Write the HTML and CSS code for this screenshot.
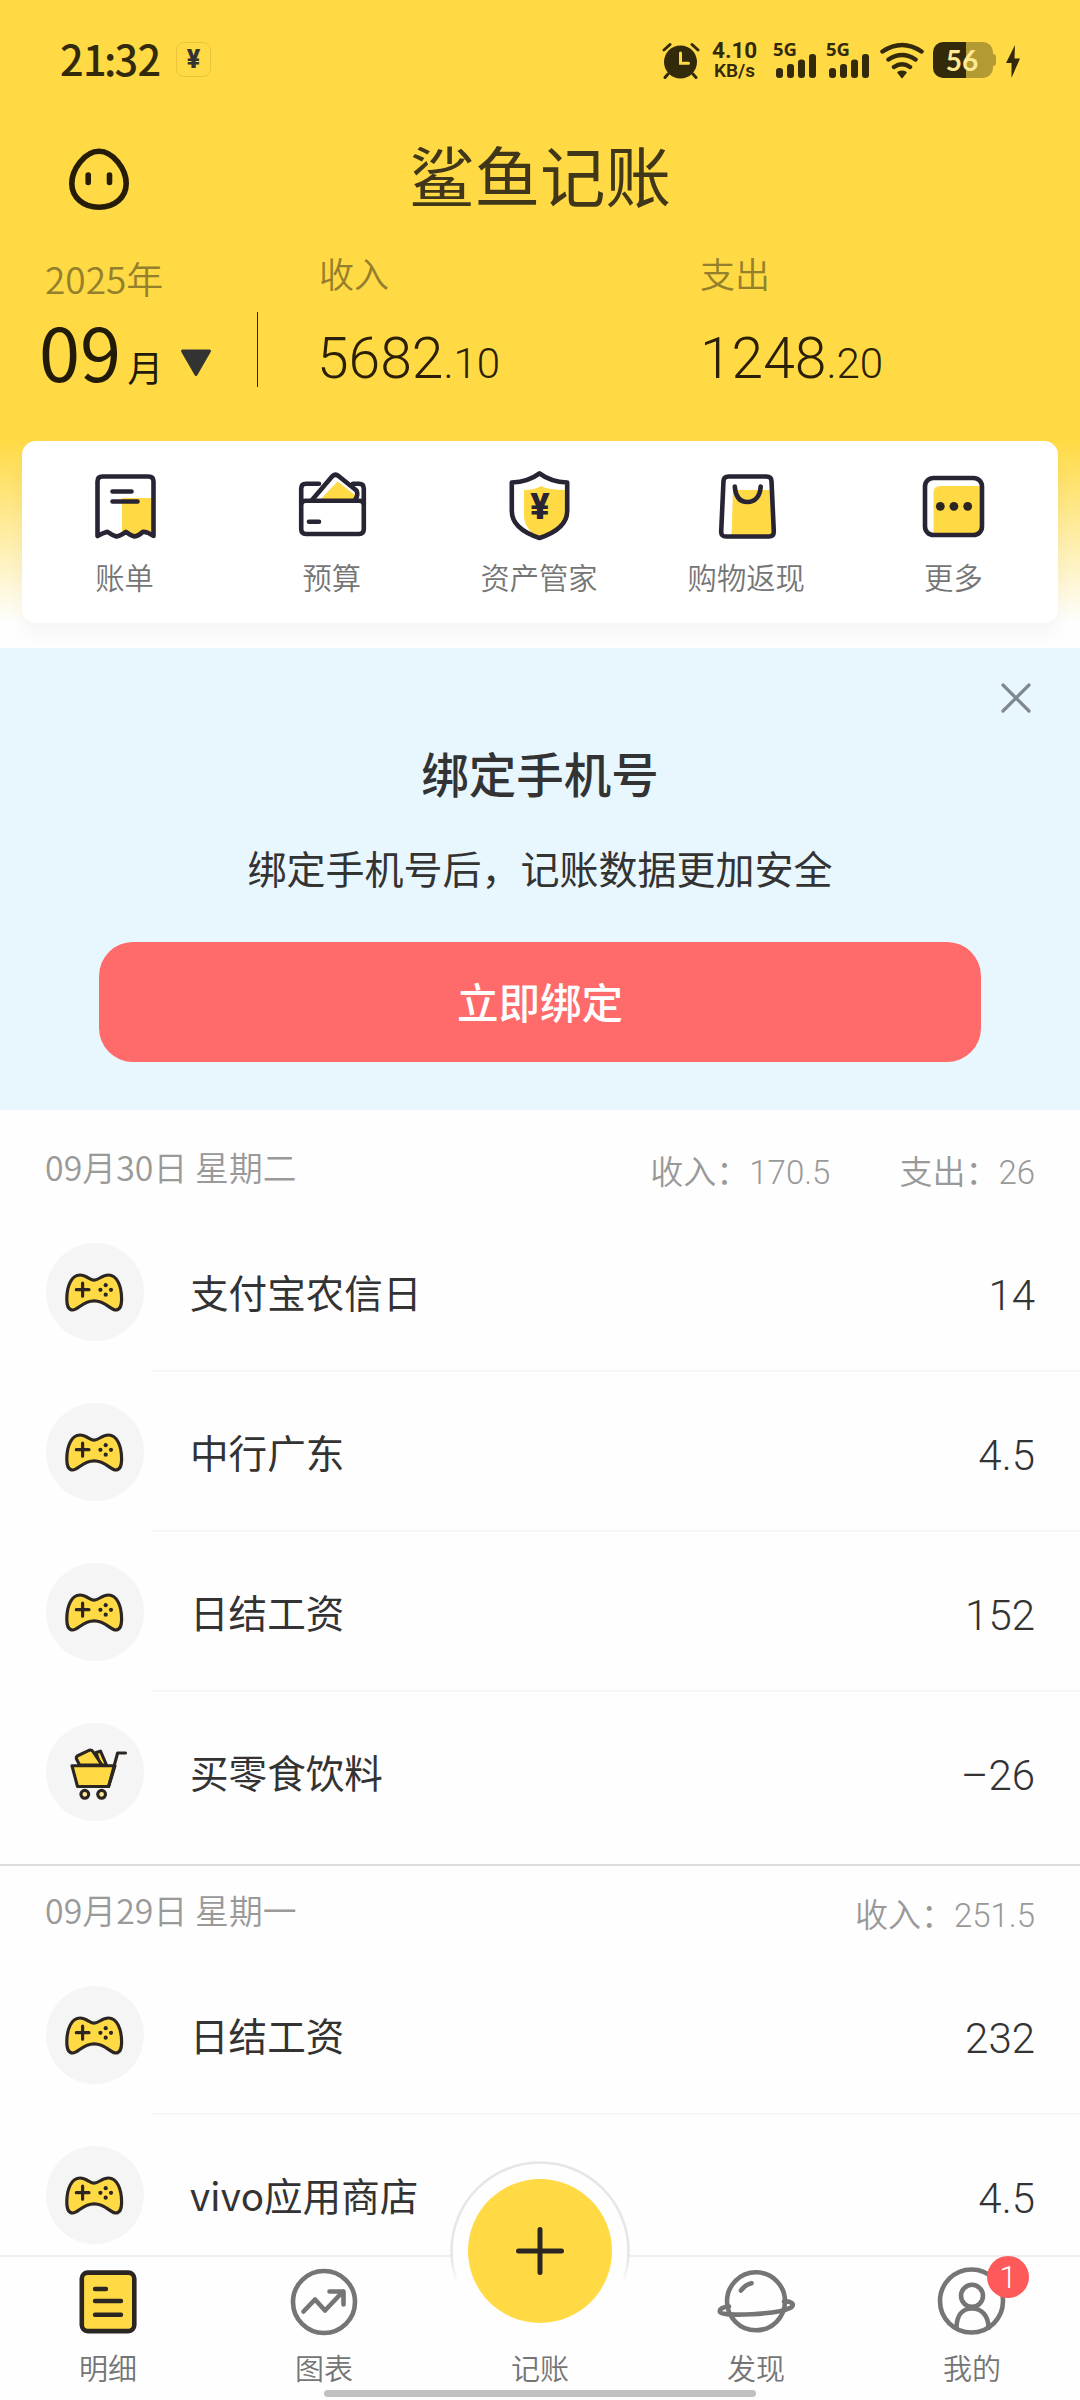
FILE: index.html
```html
<!DOCTYPE html>
<html lang="zh-CN">
<head>
<meta charset="utf-8">
<title>鲨鱼记账</title>
<link rel="stylesheet" href="styles.css">
</head>
<body>
<svg class="defs" width="0" height="0" aria-hidden="true">
  <symbol id="gamepad" viewBox="0 0 98 98">
    <path d="M48.200 37.200C44 37.200 40.500 32 34 32C25.500 32 20.800 43 20.800 56C20.800 63 22.500 67 26.700 67C32.500 67 36.500 57.800 48.200 57.800S64 67 69.700 67C73.900 67 75.600 63 75.600 56C75.600 43 71 32 62.400 32C55.900 32 52.500 37.200 48.200 37.200Z" fill="#ffda44" stroke="#2b2622" stroke-width="3.200"/>
    <path d="M30.300 46.700H43M36.600 40.200V53.200" stroke="#2b2622" stroke-width="3.200" stroke-linecap="round"/>
    <g fill="#2b2622"><circle cx="59.700" cy="42.200" r="2.100"/><circle cx="59.700" cy="51.700" r="2.100"/><circle cx="54.400" cy="46.800" r="2.100"/><circle cx="65" cy="46.800" r="2.100"/></g>
  </symbol>
  <symbol id="cart" viewBox="0 0 98 98">
    <g stroke="#2b2622" stroke-width="3.100" stroke-linejoin="round" stroke-linecap="round">
      <path d="M50 29.500L54.500 28.200L60.500 42H54Z" fill="#ffda44"/>
      <path d="M33.500 42L30.300 35.500Q30 34 31.200 33L43.500 27.200Q45.300 26.600 46.500 28L56 42Z" fill="#ffda44"/>
      <path d="M26 42.800H69L62.600 63.500H31.500Z" fill="#ffda44"/>
      <path d="M62.600 63.500L71.600 30H79.500" fill="none"/>
      <circle cx="38.800" cy="71.300" r="3.900" fill="#ffe896"/><circle cx="55.600" cy="71.300" r="3.900" fill="#ffe896"/>
    </g>
  </symbol>
  <symbol id="signal" viewBox="0 0 42 24">
    <g fill="#332a0c"><rect x="0" y="14" width="7" height="10" rx="3"/><rect x="11" y="10" width="7" height="14" rx="3"/><rect x="22" y="5.500" width="7" height="18.500" rx="3"/><rect x="33" y="0" width="7" height="24" rx="3"/></g>
  </symbol>
</svg>

<main class="screen">
  <header class="hero">
    <div class="status">
      <span class="clock">21<span class="colon">:</span>32</span>
      <span class="pay">¥</span>
      <div class="status-right">
        <svg class="alarm" width="38" height="38" viewBox="0 0 38 38" fill="none" stroke="#332a0c" stroke-linecap="round">
          <circle cx="18.500" cy="20" r="16.500" fill="#332a0c" stroke="none"/>
          <path d="M2 8L8 2.500M30 2.500L36 8M6 32L3 35.500M31 32L34 35.500" stroke-width="3"/>
          <path d="M18.500 11V21.200H26.500" stroke="#ffda44" stroke-width="3"/>
        </svg>
        <div class="speed"><b>4.10</b><b class="unit">KB/s</b></div>
        <div class="sim"><b>5G</b><svg width="42" height="24"><use href="#signal"/></svg></div>
        <div class="sim"><b>5G</b><svg width="42" height="24"><use href="#signal"/></svg></div>
        <svg class="wifi" width="46" height="38" viewBox="0 0 46 38" fill="none" stroke="#332a0c" stroke-width="4.500" stroke-linecap="round">
          <path d="M3.500 9.500Q23 -3.500 42.500 9.500M9.500 17.500Q23 8.500 36.500 17.500M15 25Q23 19.500 31 25"/>
          <path d="M19 30.500Q23 28 27 30.500L23 35.500Z" fill="#332a0c" stroke-width="1.500" stroke-linejoin="round"/>
        </svg>
        <div class="battery"><span>56</span></div>
        <svg class="bolt" width="14" height="33" viewBox="0 0 14 33"><path d="M9 0L0 18H5.500L5.500 33L14 13.500H8.500Z" fill="#332a0c"/></svg>
      </div>
    </div>

    <div class="brand">
      <svg class="face" width="62" height="64" viewBox="0 0 62 64">
        <path d="M31 4.300C45 4.300 58.200 22 58.200 36.500C58.200 50.500 46.500 60.200 31 60.200S3.800 50.500 3.800 36.500C3.800 22 17 4.300 31 4.300Z" fill="none" stroke="#261d08" stroke-width="5.600"/>
        <path d="M20.200 28V35.500M41.500 28V35.500" stroke="#261d08" stroke-width="5.600" stroke-linecap="round"/>
      </svg>
      <h1>鲨鱼记账</h1>
    </div>

    <div class="summary">
      <div class="month">
        <div class="label">2025年</div>
        <div class="value"><span class="num">09</span><span class="unit">月</span>
          <svg width="32" height="28" viewBox="0 0 32 28"><path d="M2.500 2H29.500L16 25.500Z" fill="#333" stroke="#333" stroke-width="3" stroke-linejoin="round"/></svg>
        </div>
      </div>
      <div class="total income"><div class="label">收入</div><div class="sum">5682<small>.10</small></div></div>
      <div class="total"><div class="label">支出</div><div class="sum">1248<small>.20</small></div></div>
    </div>
  </header>

  <section class="tools-wrap">
    <nav class="tools">
      <a><svg viewBox="0 0 72 72"><path d="M33 28H64V61L54 62L45 66L36 62L33 64Z" fill="#ffda44"/><path d="M8.500 66V11.500Q8.500 6.500 13.500 6.500H59.500Q64.500 6.500 64.500 11.500V66Q59 62 54 61.800Q49.500 66 45.500 66.500Q41 65 36.800 61.800Q31 66 27.500 66.500Q23 65 18.500 61.800Q14 63 8.500 66Z" class="ln"/><path d="M23.500 21.500H42.500M23.500 31.500H48.500" class="ln"/></svg><span>账单</span></a>
      <a><svg viewBox="0 0 72 72"><path d="M24 30L41.500 11.500L59 25V30Z" fill="#ffda44"/><path d="M23 13.800H10Q5.200 13.800 5.200 18.500V59Q5.200 64 10 64H63Q67.800 64 67.800 59V18.500Q67.800 13.800 63 13.800H57M5.500 34Q6 30.700 10 30.700H63Q67 30.700 67.500 34" class="ln"/><path d="M16 30L36.500 6Q39.500 3.500 42.500 6L60.500 20.500Q62.500 25 59.500 29" class="ln"/><path d="M13 51.700H23" class="ln"/></svg><span>预算</span></a>
      <a><svg viewBox="0 0 72 72"><path d="M21 20Q32 20 38 16Q45 20 63 20V43C62 56 48 64 37 68C29 64 21 57 21 45Z" fill="#ffda44"/><path d="M8.800 12.500C20 12 29 9 36.500 3.300C44 9 53 12 64.200 12.500V41C64.200 55 50 63.500 36.500 68C23 63.500 8.800 55 8.800 41Z" class="ln"/><text x="37" y="49" class="yen">¥</text></svg><span>资产管家</span></a>
      <a><svg viewBox="0 0 72 72"><path d="M23 20H60L63 66H21.500Z" fill="#ffda44"/><path d="M18.500 6.500H56.500Q61.300 6.500 61.500 11L63.800 61.500Q63.800 66.500 59 66.500H16Q11 66.500 11.200 61.500L13.500 11Q13.700 6.500 18.500 6.500Z" class="ln"/><path d="M24.800 16.500C25.500 26.500 30 32 37.500 32S50 26.500 50.700 16.500" class="ln"/></svg><span>购物返现</span></a>
      <a><svg viewBox="0 0 72 72"><path d="M16.500 23Q16.500 16 23.500 16H64V65H16.500Z" fill="#ffda44"/><rect x="8" y="8" width="57" height="57" rx="8.500" class="ln"/><g fill="#2b2622"><circle cx="23.300" cy="36.300" r="4.400"/><circle cx="36.900" cy="36.300" r="4.400"/><circle cx="50.700" cy="36.300" r="4.400"/></g></svg><span>更多</span></a>
    </nav>
  </section>

  <section class="bind">
    <svg class="close" width="30" height="30" viewBox="0 0 30 30"><path d="M2 2L28 28M28 2L2 28" stroke="#7f888d" stroke-width="3.200" stroke-linecap="round"/></svg>
    <h2>绑定手机号</h2>
    <p>绑定手机号后，记账数据更加安全</p>
    <button>立即绑定</button>
  </section>

  <section class="day">
    <div class="day-head"><span class="date">09月30日 星期二</span><span class="stat">收入：<i>170.5</i></span><span class="stat">支出：<i>26</i></span></div>
    <div class="row"><svg class="icon"><use href="#gamepad"/></svg><div class="cell"><span>支付宝农信日</span><b>14</b></div></div>
    <div class="row"><svg class="icon"><use href="#gamepad"/></svg><div class="cell"><span>中行广东</span><b>4.5</b></div></div>
    <div class="row"><svg class="icon"><use href="#gamepad"/></svg><div class="cell"><span>日结工资</span><b>152</b></div></div>
    <div class="row"><svg class="icon"><use href="#cart"/></svg><div class="cell"><span>买零食饮料</span><b>–26</b></div></div>
  </section>
  <section class="day second">
    <div class="day-head"><span class="date">09月29日 星期一</span><span class="stat">收入：<i>251.5</i></span></div>
    <div class="row"><svg class="icon"><use href="#gamepad"/></svg><div class="cell"><span>日结工资</span><b>232</b></div></div>
    <div class="row"><svg class="icon"><use href="#gamepad"/></svg><div class="cell"><span>vivo应用商店</span><b>4.5</b></div></div>
  </section>

  <footer class="tabs">
    <a><svg viewBox="0 0 78 72"><rect x="12.800" y="6.600" width="52.500" height="58.500" rx="6" fill="#ffda44" stroke="#2b2622" stroke-width="4.600"/><path d="M26 23H37M26 35H52M26 48.700H52" stroke="#2b2622" stroke-width="4.400" stroke-linecap="round"/></svg><span>明细</span></a>
    <a><svg viewBox="0 0 78 72" class="grey"><circle cx="39" cy="36" r="31"/><path d="M18.500 45.500L30 33.500L40 44.500L58 25.500M44.500 25.500H58.500V38.500"/></svg><span>图表</span></a>
    <a class="add"><svg class="fab" viewBox="0 0 180 180">
      <defs><linearGradient id="fade" x1="0" y1="0" x2="0" y2="1"><stop offset=".55" stop-color="#e6e6e6"/><stop offset=".68" stop-color="#fefefe"/></linearGradient></defs>
      <circle cx="90" cy="90" r="88.500" fill="#fefefe" stroke="url(#fade)" stroke-width="2.500"/>
      <circle cx="90" cy="90" r="72" fill="#ffda44"/>
      <path d="M68.500 90H111.500M90 68.500V111.500" stroke="#2b2622" stroke-width="5" stroke-linecap="round"/></svg><span>记账</span></a>
    <a><svg viewBox="0 0 78 72" class="grey"><circle cx="39" cy="35.300" r="29"/><path d="M24 24.500Q28 18.500 34.500 17.200M12 40.500C5 41 2 43.500 3 46C5.500 51 62 48.500 74 41.500C79 38 73 34.800 67 35.500" stroke-linecap="round"/></svg><span>发现</span></a>
    <a class="me"><svg viewBox="0 0 78 72" class="grey"><circle cx="38.500" cy="35" r="31.500"/><circle cx="39" cy="29.800" r="11"/><path d="M23.500 62C23.500 50 29 42.500 39 42.500S55.500 50 55.500 62"/></svg><em>1</em><span>我的</span></a>
    <div class="handle"></div>
  </footer>
</main>
</body>
</html>
```
FILE: styles.css
```css
* { box-sizing: border-box; }
body { margin: 0; font-family: "Noto Sans CJK SC", sans-serif; background: #fefefe; color: #333; }
h1, h2, p { margin: 0; font-weight: 400; }
.defs { position: absolute; }
svg { display: block; flex: none; }
.screen { position: relative; width: 1080px; height: 2400px; overflow: hidden; background: #fefefe; }

/* header */
.hero { height: 441px; background: #ffda44; }
.status { display: flex; align-items: flex-start; height: 120px; padding: 42px 60px 0 60px; color: #332a0c; }
.clock { width: 116px; font-size: 41.500px; font-weight: 500; line-height: 32px; letter-spacing: -.7px; white-space: nowrap; }
.colon { margin: 0 -1px 0 -2px; }
.pay { width: 35px; height: 35px; border: 1px solid #eac53a; border-radius: 8px; font: 900 25px/34px Roboto, sans-serif; text-align: center; color: #333; }
.status-right { display: flex; margin-left: auto; height: 36px; }
.alarm { margin-right: 12px; }
.speed { display: flex; flex-direction: column; width: 48px; margin: -4px 13px 0 0; font-family: Roboto, sans-serif; }
.speed b { font-size: 22.500px; line-height: 24px; font-weight: 700; }
.speed .unit { font-size: 19px; line-height: 18px; padding-left: 2px; font-weight: 600; }
.sim { width: 53px; height: 36px; display: flex; flex-direction: column; }
.sim b { font: 700 18.500px/14px "Noto Sans", sans-serif; height: 12px; }
.sim svg { margin-left: 3px; }
.wifi { margin: 0 8px 0 0; }
.battery { position: relative; width: 60px; height: 36px; border-radius: 10px; background: linear-gradient(90deg, #332a0c 0 33px, #b49a32 33px); color: #ffe993; font: 700 28px/36px Lato, sans-serif; text-align: center; padding-right: 2px; }
.battery::after { content: ""; position: absolute; left: 60px; top: 12px; width: 3px; height: 12px; border-radius: 0 3px 3px 0; background: #b49a32; }
.bolt { margin: 3px 0 0 13px; }

.brand { display: grid; grid-template-columns: 1fr auto 1fr; align-items: center; height: 118px; padding: 0 68px; }
.brand h1 { margin-top: -10px; font-size: 65.500px; line-height: 72px; font-weight: 400; color: #40371a; }

.summary { display: flex; padding-top: 10px; }
.label { font-size: 35px; line-height: 40px; color: #94802c; }
.month { width: 258px; height: 150px; padding: 10px 0 0 45px; }
.month .label { font-size: 37px; font-weight: 350; }
.month .value { display: flex; align-items: baseline; width: 214px; height: 75px; margin-top: 14px; margin-left: -1px; border-right: 1px solid #2b2411; color: #221b09; line-height: 75px; }
.month .num { font-size: 74px; margin-left: -5px; }
.month .unit { font-size: 36px; margin-left: 6px; }
.month svg { margin: 37px 0 0 17px; align-self: flex-start; }
.total { width: 381px; padding-left: 61px; }
.total .label { padding-top: 5px; font-weight: 350; }
.sum { margin-top: 33px; margin-left: -2px; font: 300 57px/66px Roboto, sans-serif; color: #2b2005; }
.total:last-child .sum { margin-left: 0; }
.sum small { font-size: 42px; }

/* shortcuts */
.tools-wrap { height: 207px; padding: 0 22px; background: linear-gradient(#ffda44, #fefefe 88%); }
.tools { display: flex; height: 182px; border-radius: 14px; background: #fff; box-shadow: 0 12px 18px rgba(0,0,0,.035); }
.tools a { flex: 1; display: flex; flex-direction: column; align-items: center; padding: 29px 2px 0 0; }
.tools svg { width: 72px; height: 72px; }
.tools span { margin-top: 14px; font-size: 29.300px; line-height: 40px; font-weight: 350; color: #757575; }
.ln { fill: none; stroke: #282433; stroke-width: 4.600px; stroke-linecap: round; stroke-linejoin: round; }
.yen { font: 900 36px Roboto, sans-serif; text-anchor: middle; fill: #282433; }

/* bind phone */
.bind { position: relative; display: flex; flex-direction: column; align-items: center; height: 462px; padding-top: 93px; background: #e8f6fd; }
.close { position: absolute; right: 49px; top: 35px; }
.bind h2 { font-size: 47.500px; line-height: 64px; font-weight: 500; }
.bind p { margin-top: 34px; font-size: 39px; line-height: 56px; }
.bind button { width: 882px; height: 120px; margin-top: 47px; border: 0; border-radius: 34px; background: #ff6b6b; color: #fff; font: 500 41.500px/118px "Noto Sans CJK SC", sans-serif; padding: 0 0 2px; }

/* records */
.day-head { display: flex; align-items: flex-start; height: 102px; padding: 34px 45px 0; font-size: 33px; line-height: 46px; color: #999; font-weight: 350; }
.date { margin-right: auto; font-size: 33.800px; letter-spacing: .1px; }
.stat { padding-top: 3px; margin-left: 69px; }
.stat i { font: 300 33px Roboto, sans-serif; }
.row { display: flex; align-items: center; height: 160px; padding-left: 46px; }
.icon { width: 98px; height: 98px; border-radius: 50%; background: #f5f5f5; }
.cell { flex: 1; display: flex; justify-content: space-between; align-items: center; height: 160px; margin-left: 7px; padding: 0 45px 0 39px; border-bottom: 2px solid #f7f7f7; font-size: 38.600px; font-weight: 400; }
.cell b { margin-top: 9px; font: 300 42px/50px Roboto, sans-serif; }
.row:last-child .cell { border-color: transparent; }
.second { margin-top: 12px; border-top: 2px solid #dedede; }
.second .day-head { height: 89px; padding-top: 21px; }

/* tab bar */
.tabs { position: absolute; left: 0; bottom: 0; display: flex; width: 1080px; height: 145px; border-top: 2px solid #efefef; background: #fefefe; }
.tabs a { position: relative; flex: 1; display: flex; flex-direction: column; align-items: center; padding-top: 9px; }
.tabs svg { width: 78px; height: 72px; }
.tabs span { margin-top: 9px; font-size: 29px; line-height: 40px; font-weight: 350; color: #757575; }
.grey { fill: none; stroke: #757575; stroke-width: 4.600px; stroke-linecap: round; stroke-linejoin: round; }
.tabs .fab { position: absolute; left: 18px; top: -96px; width: 180px; height: 180px; }
.tabs .add { padding-top: 81px; }
.me em { position: absolute; left: 123px; top: -1px; width: 42px; height: 42px; border-radius: 50%; background: #ff5a5a; color: #fff; font: 300 31px/43px Roboto, sans-serif; text-align: center; }
.handle { position: absolute; left: 324px; bottom: 3px; width: 432px; height: 7px; border-radius: 4px; background: #c1c1c1; }
```
